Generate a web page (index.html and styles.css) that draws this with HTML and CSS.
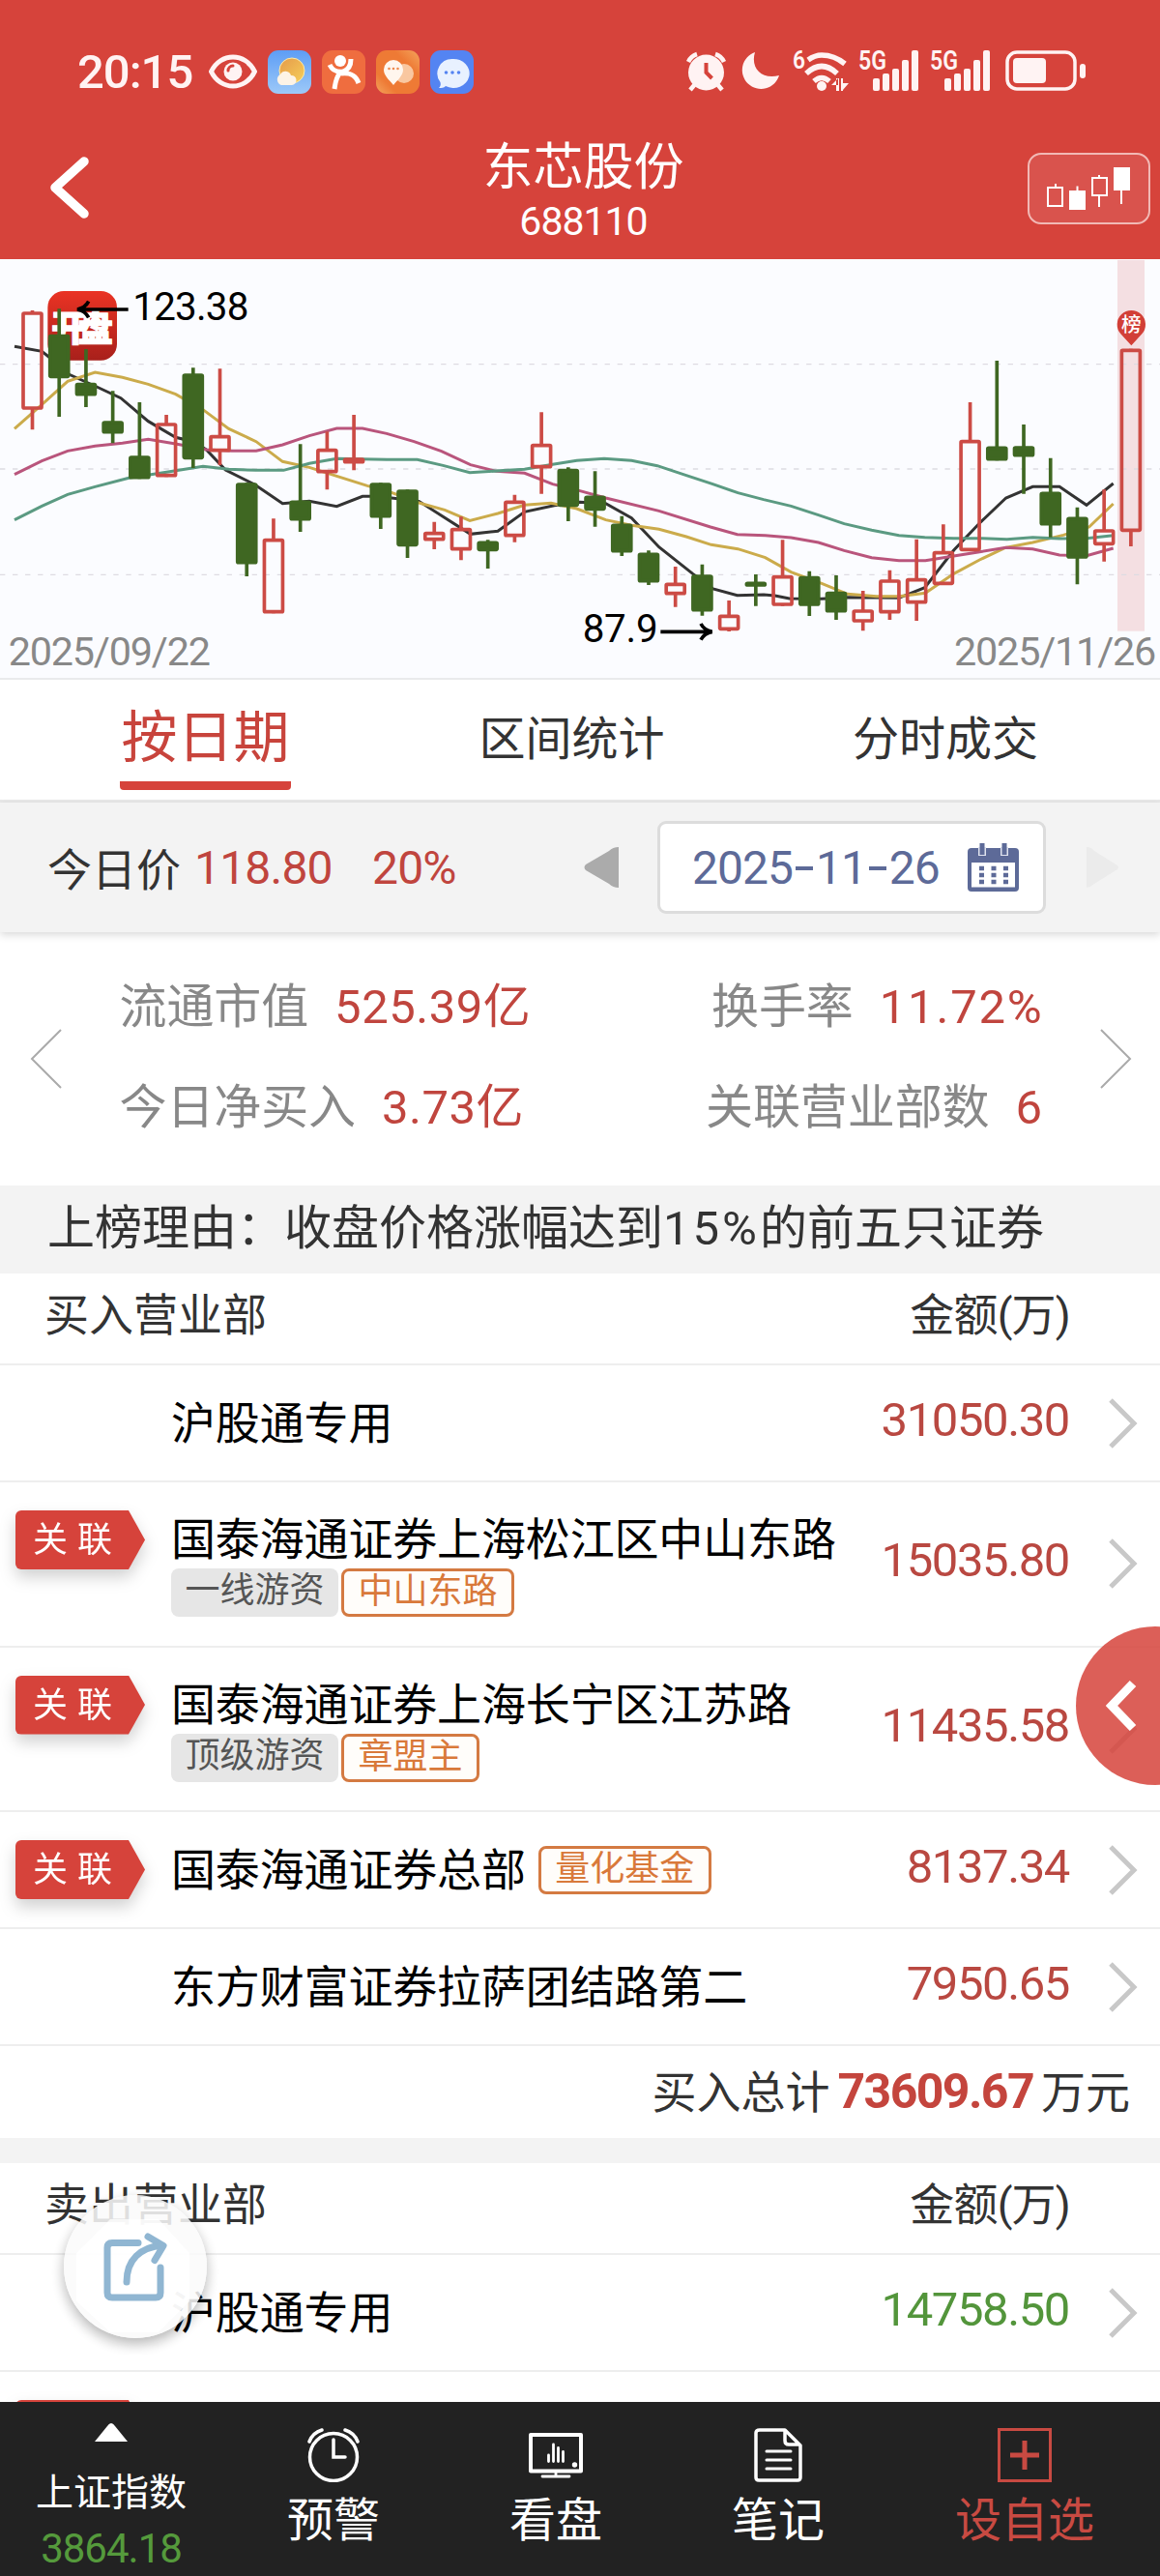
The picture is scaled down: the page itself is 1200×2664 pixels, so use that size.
FILE: index.html
```html
<!DOCTYPE html>
<html lang="zh-CN">
<head>
    <meta charset="UTF-8">
    <meta name="viewport" content="width=device-width, initial-scale=1.0">
    <title>东芯股份 688110</title>
    <link rel="stylesheet" href="styles.css">
</head>
<body>

<div class="screen">
    <!-- 状态栏 -->
    <div class="status-bar">
        <div class="status-left">
            <span class="clock">20:15</span>
            <svg class="eye" width="50" height="38" viewBox="0 0 50 38">
                <path d="M2.5 19C12-1 38-1 47.5 19 38 39 12 39 2.5 19Z" fill="none" stroke="#fff3f3" stroke-width="5" stroke-linejoin="round"/>
                <circle cx="25" cy="19" r="9.5" fill="#fff3f3"/>
                <path d="M20 18a5 5 0 0 1 5-5" fill="none" stroke="#d6433b" stroke-width="3" stroke-linecap="round"/>
            </svg>
            <svg width="45" height="45" viewBox="0 0 45 45">
                <defs>
                    <linearGradient id="sky" x1="0" y1="0" x2="0" y2="1"><stop offset="0" stop-color="#5d9df5"/><stop offset="1" stop-color="#9dc9f8"/></linearGradient>
                    <linearGradient id="sun" x1="0" y1="0" x2="1" y2="1"><stop offset="0" stop-color="#e59a4a"/><stop offset="1" stop-color="#f6cf5a"/></linearGradient>
                </defs>
                <rect width="45" height="45" rx="11" fill="url(#sky)"/>
                <circle cx="25" cy="21" r="13" fill="url(#sun)" stroke="#fdeaa8" stroke-width="1"/>
                <path d="M14 36a6 6 0 0 1-1-11 6 6 0 0 1 11 1 5 5 0 0 1 1 10Z" fill="#fdf3e6"/>
            </svg>
            <svg width="45" height="45" viewBox="0 0 45 45">
                <rect width="45" height="45" rx="11" fill="#ef6d3f"/>
                <g fill="none" stroke="#fff" stroke-width="5">
                    <path d="M8 15c3 6 8 8 14 7 6-2 8-6 8-13"/>
                    <path d="M13 40c1-6 1-11 6-17M20 24c10-1 15 2 18 10"/>
                </g>
                <circle cx="19" cy="11" r="6" fill="#fff"/>
            </svg>
            <svg width="45" height="45" viewBox="0 0 45 45">
                <defs><linearGradient id="org" x1="1" y1="0" x2="0" y2="1"><stop offset="0" stop-color="#f4a45d"/><stop offset=".3" stop-color="#ee7a35"/><stop offset=".75" stop-color="#ee7a35"/><stop offset="1" stop-color="#f4a45d"/></linearGradient></defs>
                <rect width="45" height="45" rx="11" fill="url(#org)"/>
                <circle cx="29" cy="24" r="10" fill="#f9c7a0"/>
                <path d="M18 36c-5-6-10-10-10-16a10 10 0 0 1 20 0c0 6-5 10-10 16Z" fill="#fff6ee"/>
                <g fill="#ee8a4f"><circle cx="13.500" cy="19" r="1.300"/><circle cx="18" cy="19" r="1.300"/><circle cx="22.500" cy="19" r="1.300"/></g>
            </svg>
            <svg width="45" height="45" viewBox="0 0 45 45">
                <rect width="45" height="45" rx="11" fill="#5484f2"/>
                <path d="M23 9a16.500 15 0 1 1-7 28c-2 2-4 2-7 2 2-2 2-4 1.500-6A15 15 0 0 1 23 9Z" fill="#e8f1ff"/>
                <g fill="#5484f2"><circle cx="16.500" cy="23" r="1.800"/><circle cx="23" cy="23" r="1.800"/><circle cx="29.500" cy="23" r="1.800"/></g>
            </svg>
        </div>
        <svg class="status-right" width="414" height="56" viewBox="710 40 414 56" fill="#fff3f3">
            <!-- 闹钟 -->
            <circle cx="730.500" cy="75" r="18.500"/>
            <g fill="none" stroke="#fff3f3" stroke-width="4.500">
                <path d="M712 64a15 15 0 0 1 9-8M749 64a15 15 0 0 0-9-8M719 87l-5 6M742 87l5 6"/>
                <path d="M730.500 65v10l6 6" stroke="#d6433b" stroke-width="4"/>
            </g>
            <!-- 月亮 -->
            <path d="M781 54c-5 16 7 29 25 24a19.500 19.500 0 1 1-25-24Z"/>
            <!-- 无线网络 -->
            <text class="net" x="820" y="71" font-size="26" textLength="13" lengthAdjust="spacingAndGlyphs">6</text>
            <g fill="none" stroke="#fff3f3" stroke-width="5.500">
                <path d="M836 62q7-5 14-5 13 0 24 9M834 76q16-15 32 0M842 84q8-7 16 0"/>
            </g>
            <circle cx="850" cy="89" r="5"/>
            <path d="M860 88h7v-7ZM865 81h3v13h-3ZM870 81h2v13h-2ZM872 93v-7h6Z"/>
            <text class="net" x="888" y="72" font-size="28" textLength="29" lengthAdjust="spacingAndGlyphs">5G</text>
            <g id="bars">
                <rect x="903" y="81" width="7" height="13" rx="2"/>
                <rect x="913" y="76" width="7" height="18" rx="2"/>
                <rect x="923" y="71" width="7" height="23" rx="2"/>
                <rect x="933" y="62" width="7" height="32" rx="2"/>
                <rect x="943" y="52" width="7" height="42" rx="2"/>
            </g>
            <text class="net" x="962" y="72" font-size="28" textLength="29" lengthAdjust="spacingAndGlyphs">5G</text>
            <use href="#bars" x="74"/>
            <!-- 电池 -->
            <rect x="1042" y="54" width="70" height="38" rx="10" fill="none" stroke="#fff3f3" stroke-width="3.500"/>
            <rect x="1048" y="60" width="34" height="26" rx="4"/>
            <rect x="1117" y="66" width="6" height="15" rx="3"/>
        </svg>
    </div>

    <!-- 标题栏 -->
    <div class="header">
        <svg class="back" width="50" height="70" viewBox="0 0 50 70"><path d="M41 8 11 35l30 27" fill="none" stroke="#fff" stroke-width="9.500" stroke-linecap="round" stroke-linejoin="round"/></svg>
        <div class="title">
            <div class="stock-name">东芯股份</div>
            <div class="stock-code">688110</div>
        </div>
        <div class="kline-btn">
            <svg width="86" height="45" viewBox="0 0 86 45" stroke="#fff" stroke-width="2" fill="none">
                <path d="M9 17v4M9.500 21H1v19h15V21H9M31.500 19.500v5M54 8v4M54 30v11M77 23v15"/>
                <rect x="24" y="25" width="15" height="18" fill="#fff"/>
                <rect x="47" y="11" width="15" height="18"/>
                <rect x="70" y="1" width="15" height="22" fill="#fff"/>
            </svg>
        </div>
    </div>

    <!-- K线图 -->
    <div class="chart">
        <svg width="1200" height="433" viewBox="0 9 3600 1299">
            <defs>
                <linearGradient id="logo" x1="0" y1="0" x2="0" y2="1"><stop offset="0" stop-color="#ea3324"/><stop offset="1" stop-color="#a8201b"/></linearGradient>
            </defs>
            <rect x="3468" y="12" width="84" height="1151" fill="#f4dfe2"/>
            <path class="grid" d="M0 335H3600M0 660H3600M0 988H3600"/>
            <polyline class="ma ma5" points="45,280 130,295 155,315 215,367 300,405 375,440 460,512 545,562 600,575 640,600 700,663 790,708 877,767 960,760 1045,776 1125,745 1165,745 1215,750 1300,760 1460,862 1545,853 1628,793 1720,773 1800,763 1880,767 1960,812 2045,902 2150,985 2213,1032 2288,1052 2370,1050 2405,1053 2450,1062 2550,1063 2630,1058 2790,1060 2870,1028 2960,912 3040,828 3122,750 3205,715 3288,715 3372,772 3455,705"/>
            <polyline class="ma ma10" points="45,535 130,460 210,388 295,360 380,376 460,397 545,428 630,476 710,535 795,575 877,637 960,655 1045,682 1140,712 1215,733 1300,765 1380,787 1458,820 1545,798 1628,772 1710,766 1790,783 1880,818 1960,835 2045,847 2130,870 2207,895 2290,908 2375,935 2455,980 2550,1015 2630,1048 2720,1055 2790,1055 2872,1045 2960,985 3040,942 3120,904 3205,888 3300,865 3380,840 3455,768"/>
            <polyline class="ma ma20" points="45,677 130,635 210,604 295,589 380,580 460,568 545,582 640,600 720,604 795,604 877,585 960,557 1045,534 1125,534 1200,550 1285,575 1370,605 1460,647 1540,667 1628,673 1715,707 1800,728 1880,750 2045,790 2205,840 2288,863 2375,866 2455,873 2540,888 2620,913 2705,935 2790,944 2872,944 2960,930 3040,917 3122,904 3205,908 3288,927 3372,929 3455,906"/>
            <polyline class="ma ma30" points="45,818 130,775 210,739 295,715 400,688 517,670 630,652 710,661 795,664 880,664 960,643 1045,628 1200,631 1295,631 1375,649 1458,671 1628,661 1715,646 1790,634 1875,628 1960,634 2040,650 2130,680 2210,706 2290,734 2370,755 2455,775 2540,803 2620,830 2705,850 2790,866 2870,872 2960,875 3050,875 3125,878 3205,872 3288,876 3372,875 3455,866"/>
            <rect x="148" y="108" width="215" height="215" rx="50" fill="url(#logo)"/>
            <text class="logo-text" x="160" y="264" textLength="190">开盘</text>
            <g id="candles"></g>
            <path class="arrow" d="M398 165H245M275 140q-10 20-35 25q25 5 35 25M2050 1165H2205M2175 1140q10 20 35 25q-25 5-35 25"/>
            <text class="mark" x="412" y="198" textLength="360">123.38</text>
            <text class="mark" x="1808" y="1196" textLength="234">87.9</text>
            <path d="M3511 277 3478 241A44 44 0 1 1 3544 241Z" fill="#d23f37"/>
            <text class="pin" x="3511" y="234">榜</text>
            <text class="date" x="26" y="1270" textLength="628">2025/09/22</text>
            <text class="date" x="2961" y="1270" textLength="628">2025/11/26</text>
        </svg>
    </div>

    <div class="tabs">
        <div class="tab active">按日期</div>
        <div class="tab">区间统计</div>
        <div class="tab">分时成交</div>
    </div>

    <div class="price-bar">
        <span class="label">今日价</span>
        <span class="price">118.80</span>
        <span class="percent">20%</span>
        <svg class="prev" width="36" height="42" viewBox="0 0 36 42"><path d="M36 0v42Q30 42 26 38L2 24q-3-3 0-6L26 4Q30 0 36 0Z" fill="#ababab"/></svg>
        <div class="date-box">
            <span>2025<i></i>11<i></i>26</span>
            <svg width="53" height="50" viewBox="0 0 53 50" fill="#5d6a98">
                <rect x="0" y="5" width="53" height="45" rx="4"/>
                <path d="M11 4V13H19V4M34 4V13H42V4" fill="#dfe2ee"/>
                <rect x="12.500" y="0" width="5" height="12"/><rect x="35.500" y="0" width="5" height="12"/>
                <rect x="4" y="20" width="45" height="25.500" fill="#fff"/>
                <path d="M12 26H42M12 33H42M12 40H42" stroke="#5d6a98" stroke-width="4.500" stroke-dasharray="5 7.500"/>
            </svg>
        </div>
        <svg class="next" width="34" height="42" viewBox="0 0 34 42"><path d="M0 0v42q5-1 8-4L32 23q2-2 0-4L8 4Q5 0 0 0Z" fill="#ebebeb"/></svg>
    </div>

    <div class="stats">
        <svg width="34" height="62" viewBox="0 0 34 62"><path d="M32 1 2 31l30 30" fill="none" stroke="#aaa" stroke-width="2"/></svg>
        <div class="stats-grid">
            <div>流通市值<b>525.39亿</b></div>
            <div class="right">换手率<b class="rate">11.72%</b></div>
            <div>今日净买入<b>3.73亿</b></div>
            <div class="right">关联营业部数<b>6</b></div>
        </div>
        <svg width="34" height="62" viewBox="0 0 34 62"><path d="M2 1l30 30L2 61" fill="none" stroke="#aaa" stroke-width="2"/></svg>
    </div>

    <div class="reason">上榜理由：收盘价格涨幅达到<span>15%</span>的前五只证券</div>

    <!-- 买入 -->
    <div class="list-head"><span>买入营业部</span><span class="unit">金额(万)</span></div>
    <div class="row">
        <div class="info"><div class="name">沪股通专用</div></div>
        <div class="amount">31050.30</div>
        <svg class="more" width="32" height="54" viewBox="0 0 32 54"><path d="M3 3l24 24L3 51"/></svg>
    </div>
    <div class="row tall">
        <div class="badge"><span>关联</span></div>
        <div class="info">
            <div class="name">国泰海通证券上海松江区中山东路</div>
            <div class="tags"><span class="tag">一线游资</span><span class="tag orange">中山东路</span></div>
        </div>
        <div class="amount">15035.80</div>
        <svg class="more" width="32" height="54" viewBox="0 0 32 54"><path d="M3 3l24 24L3 51"/></svg>
    </div>
    <div class="row tall">
        <div class="badge"><span>关联</span></div>
        <div class="info">
            <div class="name">国泰海通证券上海长宁区江苏路</div>
            <div class="tags"><span class="tag">顶级游资</span><span class="tag orange">章盟主</span></div>
        </div>
        <div class="amount">11435.58</div>
        <svg class="more" width="32" height="54" viewBox="0 0 32 54"><path d="M3 3l24 24L3 51"/></svg>
    </div>
    <div class="row">
        <div class="badge"><span>关联</span></div>
        <div class="info"><div class="name">国泰海通证券总部<span class="tag orange">量化基金</span></div></div>
        <div class="amount">8137.34</div>
        <svg class="more" width="32" height="54" viewBox="0 0 32 54"><path d="M3 3l24 24L3 51"/></svg>
    </div>
    <div class="row">
        <div class="info"><div class="name">东方财富证券拉萨团结路第二</div></div>
        <div class="amount">7950.65</div>
        <svg class="more" width="32" height="54" viewBox="0 0 32 54"><path d="M3 3l24 24L3 51"/></svg>
    </div>
    <div class="total">买入总计<b>73609.67</b>万元</div>

    <!-- 卖出 -->
    <div class="list-head sell"><span>卖出营业部</span><span class="unit">金额(万)</span></div>
    <div class="row">
        <div class="info"><div class="name">沪股通专用</div></div>
        <div class="amount green">14758.50</div>
        <svg class="more" width="32" height="54" viewBox="0 0 32 54"><path d="M3 3l24 24L3 51"/></svg>
    </div>
    <div class="row tall">
        <div class="badge"></div>
    </div>

    <!-- 悬浮按钮 -->
    <div class="side-btn">
        <svg width="38" height="54" viewBox="0 0 38 54"><path d="M31 4 9 27l22 23" fill="none" stroke="#fff" stroke-width="9"/></svg>
    </div>
    <div class="share-btn">
        <svg width="148" height="148" viewBox="66 2270 148 148" fill="none" stroke="#8cb4d1" stroke-width="7" stroke-linecap="round" stroke-linejoin="round">
            <path d="M114 2295h50l32 35v50l-32 32h-50l-35-32v-50Z" fill="#fff" stroke="none"/>
            <path d="M143 2319.500H116q-5 0-5 5V2371q0 5 5 5H161q5 0 5-5V2345"/>
            <path d="M131 2360C131 2337 145 2324 168 2322M153 2313l16 9.500-9 15"/>
        </svg>
    </div>

    <!-- 底部导航 -->
    <div class="nav">
        <div class="nav-item index">
            <svg width="34" height="20" viewBox="0 0 34 20"><path d="M17 0q2 0 4 3l13 16H0L13 3q2-3 4-3Z" fill="#fff"/></svg>
            <span>上证指数</span>
            <em>3864.18</em>
        </div>
        <div class="nav-item">
            <svg width="56" height="56" viewBox="0 0 56 56" fill="none" stroke="#fff" stroke-width="3.500" stroke-linecap="round">
                <circle cx="28" cy="30" r="24.500"/><path d="M28 12v18h12M3 14a20 20 0 0 1 13-12M53 14A20 20 0 0 0 40 2"/>
            </svg>
            <span>预警</span>
        </div>
        <div class="nav-item">
            <svg width="56" height="56" viewBox="0 0 56 56" fill="none" stroke="#fff" stroke-width="2.800" stroke-linecap="round">
                <path d="M2 7h52v37.500H2Z" stroke-width="4" stroke-linejoin="round"/><path d="M28 45v4M14 50h28M20.500 28v6.500M25.500 17v17.500M30.500 20.500v14M35.500 24.500v10"/><circle cx="47.500" cy="38" r="1.300"/>
            </svg>
            <span>看盘</span>
        </div>
        <div class="nav-item">
            <svg width="50" height="56" viewBox="0 0 50 56" fill="none" stroke="#fff" stroke-width="3.500" stroke-linecap="round" stroke-linejoin="round">
                <path d="M6 2h26l16 16v33q0 3-3 3H5q-3 0-3-3V5q0-3 4-3ZM32 3v10q0 4 4 4h11" /><path d="M13 24h25M13 33h25M13 42h25" stroke-width="3"/>
            </svg>
            <span>笔记</span>
        </div>
        <div class="nav-item add">
            <svg width="56" height="56" viewBox="0 0 56 56" fill="none" stroke="#c84a42">
                <rect x="1.500" y="1.500" width="53" height="53" stroke-width="3"/><path d="M28 13v30M13 28h30" stroke-width="5"/>
            </svg>
            <span>设自选</span>
        </div>
    </div>
</div>

<script>
    // [high, body top, body bottom, low, up]
    const data = [
        [168, 172, 476, 538, 1], [163, 243, 378, 498, 0], [288, 393, 433, 468, 0], [418, 511, 550, 580, 0],
        [453, 619, 691, 691, 0], [492, 517, 685, 685, 1], [346, 364, 630, 657, 0], [349, 555, 607, 648, 1],
        [703, 703, 955, 993, 0], [814, 876, 1108, 1108, 1], [583, 758, 820, 855, 0], [544, 597, 673, 724, 1],
        [492, 625, 643, 664, 1], [703, 703, 811, 846, 0], [724, 724, 900, 936, 0], [824, 855, 883, 909, 1],
        [808, 843, 913, 943, 1], [880, 884, 915, 969, 0], [740, 758, 871, 887, 1], [484, 582, 658, 737, 1],
        [655, 660, 777, 822, 0], [667, 743, 789, 839, 0], [806, 830, 919, 930, 0], [913, 920, 1012, 1020, 0],
        [963, 1013, 1051, 1088, 1], [956, 988, 1102, 1115, 0], [1068, 1112, 1161, 1164, 1], [987, 1010, 1025, 1085, 0],
        [880, 990, 1085, 1085, 1], [977, 993, 1085, 1116, 0], [990, 1041, 1105, 1128, 0], [1038, 1096, 1136, 1162, 1],
        [974, 1003, 1108, 1128, 1], [878, 999, 1078, 1131, 1], [832, 915, 1020, 1020, 1], [453, 570, 915, 915, 1],
        [324, 590, 634, 634, 0], [522, 589, 622, 737, 0], [626, 731, 835, 872, 0], [779, 809, 938, 1018, 0],
        [724, 847, 897, 947, 1], [287, 287, 855, 900, 1]
    ];

    let html = "";
    data.forEach(([high, top, bottom, low, up], i) => {
        let x = 100.5 + i * 83.15;
        html += `<g class="${up ? "up" : "down"}">`;
        html += `<path d="M${x} ${high}V${top + 5}M${x} ${bottom - 5}V${low}"/>`;
        html += `<rect x="${x - 28.5}" y="${top + 5}" width="57" height="${bottom - top - 10}" rx="3"/></g>`;
    });
    document.getElementById("candles").innerHTML = html;
</script>

</body>
</html>
```
FILE: styles.css
```css
* {
    box-sizing: border-box;
}

body {
    margin: 0;
    font-family: Roboto, "Noto Sans CJK SC", sans-serif;
    color: #333;
    background: #fff;
}

svg {
    display: block;
    flex-shrink: 0;
}

.screen {
    position: relative;
    width: 1200px;
    height: 2664px;
    overflow: hidden;
    display: flex;
    flex-direction: column;
}

.screen > div {
    flex-shrink: 0;
}

/* status bar */
.status-bar {
    height: 146px;
    padding: 0 76px 0 80px;
    background: #d6433b;
    display: flex;
    justify-content: space-between;
}

.status-left {
    display: flex;
    align-items: center;
    height: 148px;
    gap: 11px;
}

.clock {
    width: 125px;
    font-size: 49px;
    font-weight: 500;
    letter-spacing: -1px;
    color: #fff3f3;
}

.status-right {
    margin-top: 40px;
}

.net {
    font-weight: 600;
}

/* header */
.header {
    height: 122px;
    background: #d6433b;
    color: #fff;
    display: flex;
    justify-content: space-between;
    padding: 0 10px 0 46px;
}

.back {
    margin-top: 13px;
}

.title {
    text-align: center;
    margin-left: 48px;
}

.stock-name {
    font-size: 52px;
    line-height: 56px;
}

.stock-code {
    font-size: 41px;
    line-height: 56px;
    letter-spacing: -1px;
    margin-top: -1px;
}

.kline-btn {
    width: 127px;
    height: 74px;
    margin-top: 12px;
    border: 2px solid #f2b9b5;
    border-radius: 14px;
    background: #d9534d;
    display: flex;
    justify-content: center;
    align-items: center;
}

/* chart */
.chart {
    height: 435px;
    background: #fbfcff;
    border-bottom: 2px solid #e9eaec;
}

.grid {
    stroke: #dddbe2;
    stroke-width: 4;
    stroke-dasharray: 16 23.1;
}

.ma {
    fill: none;
    stroke-width: 9;
}

.ma5 { stroke: #333; }
.ma10 { stroke: #cbab4b; }
.ma20 { stroke: #b9557c; }
.ma30 { stroke: #5b9a82; }

.up, .down {
    fill: none;
    stroke: #cc4b45;
    stroke-width: 11;
}

.down {
    fill: #3f6722;
    stroke: #3f6722;
}

.arrow {
    fill: none;
    stroke: #000;
    stroke-width: 11;
}

.mark {
    font-size: 121px;
    fill: #000;
}

.date {
    font-size: 124px;
    fill: #888;
}

.logo-text {
    font-size: 108px;
    font-weight: 900;
    fill: #fff;
    stroke: #fff;
    stroke-width: 4;
}

.pin {
    font-size: 62px;
    font-weight: 500;
    fill: #fff;
    text-anchor: middle;
}

/* tabs */
.tabs {
    height: 127px;
    padding: 0 126px 0 124px;
    display: flex;
    justify-content: space-between;
    border-bottom: 3px solid #e9e9e9;
}

.tab {
    font-size: 48px;
    line-height: 124px;
}

.tab.active {
    width: 177px;
    height: 114px;
    text-align: center;
    font-size: 58px;
    line-height: 120px;
    color: #c8443c;
    border-bottom: 9px solid #d6433b;
    border-radius: 4px;
}

/* price bar */
.price-bar {
    height: 134px;
    padding: 0 42px 0 49px;
    background: #f3f3f3;
    box-shadow: 0 3px 8px rgba(0, 0, 0, 0.15);
    display: flex;
    align-items: center;
    font-size: 46px;
    white-space: nowrap;
}

.label {
    margin-top: -2px;
}

.price, .percent {
    color: #c0453e;
    font-size: 48px;
    letter-spacing: -0.8px;
}

.price {
    width: 184px;
    margin-left: 14px;
}

.prev {
    margin-left: auto;
    margin-right: 40px;
}

.date-box {
    width: 402px;
    height: 96px;
    margin-right: 42px;
    padding: 0 25px 0 33px;
    border: 3px solid #dcdcdc;
    border-radius: 9px;
    background: #fff;
    display: flex;
    align-items: center;
    justify-content: space-between;
    color: #5d6a98;
    font-size: 48px;
    letter-spacing: -1px;
}

.date-box i {
    display: inline-block;
    width: 18px;
    height: 4px;
    margin: 0 3px 14px;
    background: #5d6a98;
}

/* stats */
.stats {
    height: 262px;
    padding: 0 29px 0 31px;
    display: flex;
    align-items: center;
    justify-content: space-between;
}

.stats-grid {
    width: 955px;
    margin-bottom: 2px;
    display: grid;
    grid-template-columns: 1fr 1fr;
    font-size: 49px;
    line-height: 104px;
    letter-spacing: -0.1px;
    color: #888;
}

.stats-grid .right {
    text-align: right;
}

.stats-grid b {
    font-weight: 400;
    color: #c0453e;
    margin-left: 27px;
    letter-spacing: 0.5px;
}

.stats-grid .rate {
    letter-spacing: 1.8px;
    margin-right: -1px;
}

.reason {
    height: 91px;
    padding-left: 49px;
    background: #f3f3f3;
    font-size: 49px;
    line-height: 90px;
    white-space: nowrap;
}

.reason span {
    letter-spacing: 3px;
}

/* list */
.list-head {
    height: 95px;
    padding: 0 93px 0 46px;
    display: flex;
    justify-content: space-between;
    font-size: 46px;
    line-height: 86px;
    border-bottom: 2px solid #eee;
}

.unit {
    letter-spacing: -0.8px;
}

.row {
    height: 121px;
    padding-right: 22px;
    display: flex;
    align-items: center;
    border-bottom: 2px solid #eee;
}

.row.tall {
    height: 170.5px;
}

.badge {
    width: 134px;
    height: 61px;
    margin-left: 16px;
    margin-right: -150px;
    align-self: flex-start;
    margin-top: 29px;
    filter: drop-shadow(0 8px 8px rgba(0, 0, 0, 0.18));
}

.badge::before {
    content: "";
    display: block;
    height: 61px;
    background: #d6433b;
    border-radius: 6px 0 0 6px;
    clip-path: polygon(0 0, 117px 0, 100% 50%, 117px 100%, 0 100%);
}

.badge span {
    display: block;
    margin-top: -61px;
    padding-left: 18px;
    position: relative;
    color: #fff;
    font-size: 36px;
    line-height: 62px;
    letter-spacing: 10px;
}

.info {
    margin-left: 177px;
    flex: 1;
    white-space: nowrap;
}

.name {
    font-size: 46px;
    line-height: 60px;
    letter-spacing: -0.15px;
    color: #000;
    display: flex;
    align-items: center;
}

.tags {
    display: flex;
    gap: 3px;
}

.tag {
    height: 50px;
    padding: 0 14.5px;
    border-radius: 8px;
    background: #e6e6e6;
    color: #555;
    font-size: 36px;
    line-height: 47px;
    letter-spacing: 0;
}

.tag.orange {
    padding: 0 14.5px;
    border: 3px solid #d47a42;
    background: #fffdfa;
    color: #d9793a;
    line-height: 43px;
}

.name .tag {
    margin-left: 13px;
}

.amount {
    margin-right: 40px;
    margin-bottom: 7px;
    font-size: 49px;
    letter-spacing: -1.4px;
    color: #b94841;
}

.amount.green {
    color: #53953b;
}

.more path {
    fill: none;
    stroke: #c8c8c8;
    stroke-width: 5;
}

.total {
    height: 95px;
    padding-right: 31px;
    text-align: right;
    font-size: 46px;
    line-height: 94px;
}

.total b {
    margin: 0 8px;
    font-size: 50px;
    letter-spacing: -1.6px;
    color: #c4453d;
}

.sell {
    height: 121px;
    border-top: 26px solid #f3f3f3;
}

/* floating buttons */
.side-btn {
    position: absolute;
    left: 1113px;
    top: 1682px;
    width: 164px;
    height: 164px;
    padding: 55px 0 0 28px;
    border-radius: 50%;
    background: rgba(214, 67, 59, 0.85);
}

.share-btn {
    position: absolute;
    left: 66px;
    top: 2270px;
    width: 148px;
    height: 148px;
    border-radius: 50%;
    background: rgba(250, 250, 250, 0.9);
    box-shadow: 0 6px 14px rgba(0, 0, 0, 0.3);
    opacity: 0.96;
}

/* bottom nav */
.nav {
    position: absolute;
    left: 0;
    right: 0;
    bottom: 0;
    height: 180px;
    background: #222;
    color: #fff;
    display: grid;
    grid-template-columns: 230px 230px 230px 230px 280px;
}

.nav-item {
    padding-top: 27px;
    display: flex;
    flex-direction: column;
    align-items: center;
    font-size: 48px;
    line-height: 70px;
    white-space: nowrap;
}

.nav-item span {
    margin-top: 5px;
}

.nav-item.index {
    padding-top: 22px;
    font-size: 39px;
}

.nav-item.index span {
    margin-top: 17px;
}

.nav-item em {
    font-style: normal;
    font-size: 42px;
    letter-spacing: -1px;
    color: #559a3c;
    margin-top: -12px;
}

.nav-item.add {
    color: #c84a42;
}
```
